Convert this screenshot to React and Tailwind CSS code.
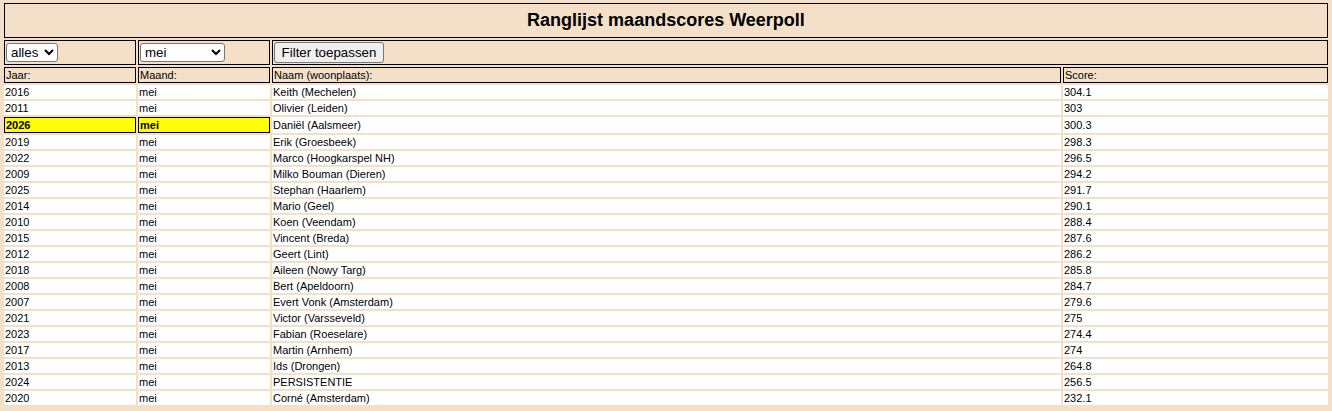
const rows = [
  ["2016", "Keith (Mechelen)", "304.1"],
  ["2011", "Olivier (Leiden)", "303"],
  ["2026", "Daniël (Aalsmeer)", "300.3", true],
  ["2019", "Erik (Groesbeek)", "298.3"],
  ["2022", "Marco (Hoogkarspel NH)", "296.5"],
  ["2009", "Milko Bouman (Dieren)", "294.2"],
  ["2025", "Stephan (Haarlem)", "291.7"],
  ["2014", "Mario (Geel)", "290.1"],
  ["2010", "Koen (Veendam)", "288.4"],
  ["2015", "Vincent (Breda)", "287.6"],
  ["2012", "Geert (Lint)", "286.2"],
  ["2018", "Aileen (Nowy Targ)", "285.8"],
  ["2008", "Bert (Apeldoorn)", "284.7"],
  ["2007", "Evert Vonk (Amsterdam)", "279.6"],
  ["2021", "Victor (Varsseveld)", "275"],
  ["2023", "Fabian (Roeselare)", "274.4"],
  ["2017", "Martin (Arnhem)", "274"],
  ["2013", "Ids (Drongen)", "264.8"],
  ["2024", "PERSISTENTIE", "256.5"],
  ["2020", "Corné (Amsterdam)", "232.1"],
];

const boxed = "border border-black bg-[#f4e0c8]";
const headCell = `${boxed} h-[16px] p-0 pl-px text-left align-middle font-normal leading-none`;
const cell = "h-[14px] bg-white p-0 pl-px align-middle leading-none";
const hit = "h-[16px] border border-black bg-[#ffff00] p-0 pl-px align-middle font-bold leading-none";
const selectStyle = "h-[19px] appearance-auto rounded-[3px] border border-[#767676] bg-white text-[13.33px] leading-none text-black";

function App() {
  return (
    <div className="h-[411px] overflow-hidden bg-[#f4e0c8] px-[2px] pt-px font-['Liberation_Sans',Arial,sans-serif] text-[11px] text-black">
      <table className="w-full table-fixed border-separate border-spacing-[2px]">
        <colgroup>
          <col className="w-[132px]" />
          <col className="w-[132px]" />
          <col />
          <col className="w-[265px]" />
        </colgroup>
        <thead>
          <tr>
            <th colSpan={4} className={`${boxed} h-[35px] p-0 text-center align-middle text-[18px] font-bold`}>
              Ranglijst maandscores Weerpoll
            </th>
          </tr>
          <tr>
            <td className={`${boxed} h-[25px] p-0 pl-px align-middle`}>
              <select defaultValue="alles" className={`${selectStyle} w-[52px]`}>
                <option>alles</option>
              </select>
            </td>
            <td className={`${boxed} h-[25px] p-0 pl-px align-middle`}>
              <select defaultValue="mei" className={`${selectStyle} w-[85px]`}>
                <option>mei</option>
              </select>
            </td>
            <td colSpan={2} className={`${boxed} h-[25px] p-0 pl-px align-middle`}>
              <button className="h-[21px] w-[110px] rounded-[3px] border border-[#767676] bg-[#efefef] text-[13.33px] leading-none text-black">
                Filter toepassen
              </button>
            </td>
          </tr>
          <tr>
            <th className={headCell}>Jaar:</th>
            <th className={headCell}>Maand:</th>
            <th className={headCell}>Naam (woonplaats):</th>
            <th className={headCell}>Score:</th>
          </tr>
        </thead>
        <tbody>
          {rows.map(([year, name, score, own]) => (
            <tr key={year}>
              <td className={own ? hit : cell}>{year}</td>
              <td className={own ? hit : cell}>mei</td>
              <td className={cell}>{name}</td>
              <td className={cell}>{score}</td>
            </tr>
          ))}
        </tbody>
      </table>
    </div>
  );
}

export default App;
